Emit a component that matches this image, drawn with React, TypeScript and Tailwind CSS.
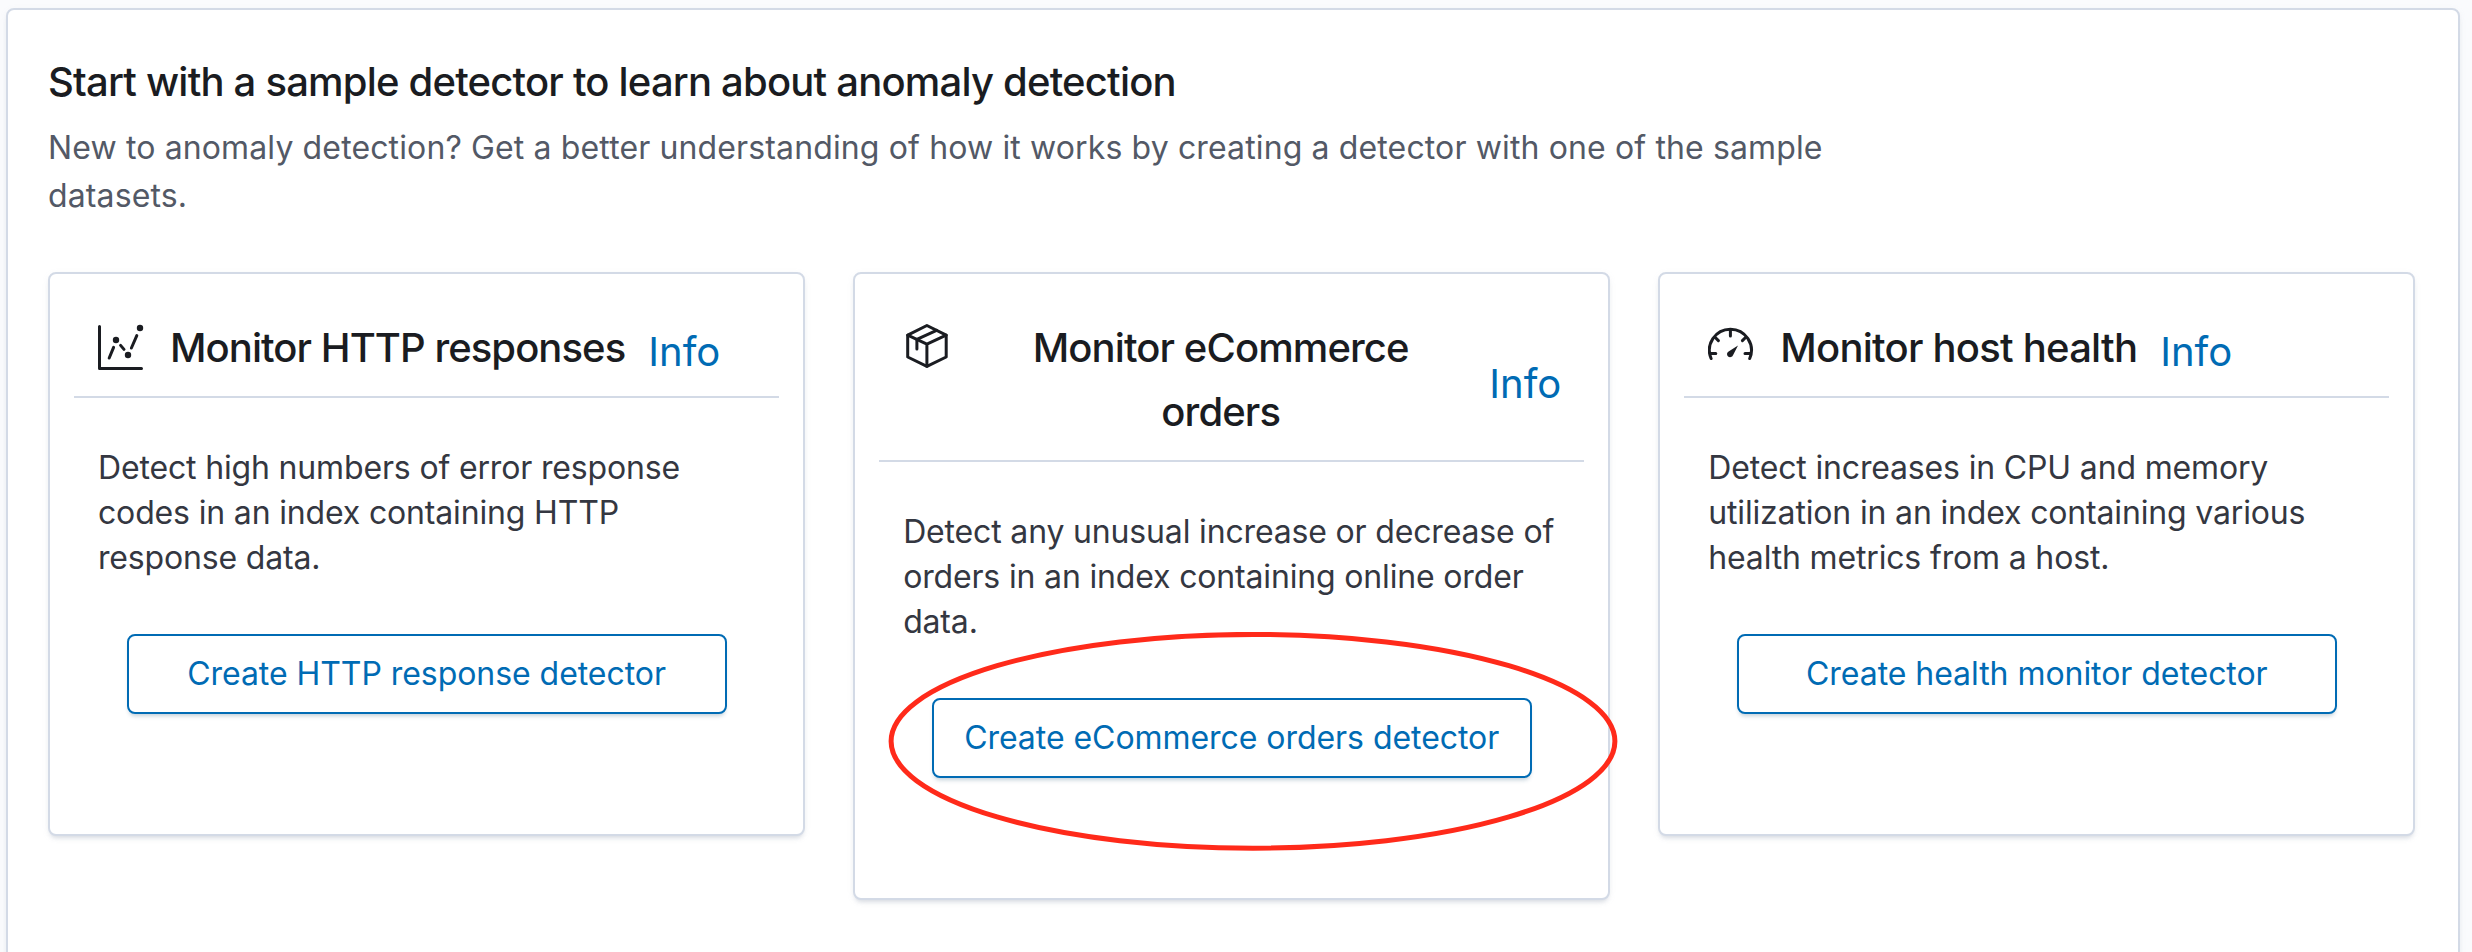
import type { ReactNode } from "react";

function ChartIcon() {
  return (
    <svg className="h-12 w-12 shrink-0" viewBox="0 0 48 48" fill="none" stroke="#1a1c21" strokeWidth="3" strokeLinecap="round" strokeLinejoin="round">
      <path d="M1.5 4.5V46.5H43.5" />
      <path d="M11.2 36L15.6 25.4M22.6 23.4L26 27.4M33.4 26L38.8 13.6" />
      <g fill="#1a1c21" stroke="none">
        <circle cx="18" cy="18" r="3.2" />
        <circle cx="30" cy="33" r="3.2" />
        <circle cx="42" cy="6" r="3.2" />
      </g>
    </svg>
  );
}

function PackageIcon() {
  return (
    <svg className="h-12 w-12 shrink-0" viewBox="0 0 48 48" fill="none" stroke="#1a1c21" strokeWidth="3" strokeLinecap="round" strokeLinejoin="round">
      <path d="M23.9 3.5L43.2 13.2V35L23.9 44.3L4.7 35V13.2Z" />
      <path d="M4.7 13.2L23.9 22.2L43.2 13.2M23.9 22.2V44.3" />
      <path d="M13.9 27V17.4L33.6 8.4" />
    </svg>
  );
}

function GaugeIcon() {
  return (
    <svg className="h-12 w-12 shrink-0" viewBox="0 0 48 48" fill="none" stroke="#1a1c21" strokeWidth="3" strokeLinecap="round">
      <path d="M3.1 36.5A21 21 0 1 1 41.7 36.5" />
      <path d="M22.4 8V14M3 31.4H7.8M41.8 31.4H37M7 15.2L10.4 18.6M37.8 15.2L34.4 18.6" />
      <path d="M30 23.6L25 33.2A3.1 3.1 0 1 1 20.6 29.4Z" fill="#1a1c21" stroke="none" />
    </svg>
  );
}

interface CardProps {
  icon: ReactNode;
  title: string;
  titleTracking: string;
  text: string;
  action: string;
  highlighted?: boolean;
}

function DetectorCard({ icon, title, titleTracking, text, action, highlighted }: CardProps) {
  return (
    <section className="flex flex-col rounded-lg border-2 border-[#d3dae6] bg-white px-6 pt-[42px] pb-[120px] shadow-[0_4px_4px_-2px_rgba(152,162,179,0.3),0_2px_10px_-4px_rgba(152,162,179,0.3)]">
      <header className="flex border-b-2 border-[#d3dae6] pb-4 pl-6 pr-[23px]">
        <div className="mr-6 pt-1.5">{icon}</div>
        <div className="flex items-center gap-[23px]">
          <h3 className={`text-center text-[40px] leading-[64px] font-medium text-[#1a1c21] ${titleTracking}`}>{title}</h3>
          <a className="mt-[7px] shrink-0 text-[40px] leading-[48px] text-[#006bb4]">Info</a>
        </div>
      </header>
      <p className="mt-[47px] px-6 text-[32px] leading-[45px] tracking-[-0.005em] text-[#343741]">{text}</p>
      <div className="relative mt-[54px] self-center">
        <button className="flex h-20 w-[600px] items-center justify-center rounded-lg border-2 border-[#006bb4] bg-white text-[32px] tracking-[-0.05px] text-[#006bb4] shadow-[0_4px_4px_-2px_rgba(54,97,126,0.3)]">
          {action}
        </button>
        {highlighted && (
          <svg className="pointer-events-none absolute -top-[66px] -left-[44px] h-[220px] w-[730px]" viewBox="0 0 730 220" fill="none">
            <ellipse cx="365" cy="109.3" rx="361.9" ry="106.9" stroke="#ff2a1a" strokeWidth="5" />
          </svg>
        )}
      </div>
    </section>
  );
}

export default function App() {
  return (
    <div className="h-[952px] w-[2472px] overflow-hidden bg-[#fafbfd] pt-2 pl-1.5 font-['Inter',sans-serif]">
      <main className="h-[1000px] w-[2454px] rounded-lg border-2 border-[#d3dae6] bg-white px-10 pt-10 shadow-[0_4px_4px_-2px_rgba(152,162,179,0.3),0_2px_10px_-4px_rgba(152,162,179,0.3)]">
        <h2 className="text-[40px] leading-[64px] font-medium tracking-[-0.02em] text-[#1a1c21]">
          Start with a sample detector to learn about anomaly detection
        </h2>
        <p className="mt-[10px] w-[1800px] text-[32px] leading-[48px] tracking-[0.13px] text-[#535966]">
          New to anomaly detection? Get a better understanding of how it works by creating a detector with one of the sample datasets.
        </p>
        <div className="mt-[52px] grid w-[2367.4px] grid-cols-3 items-start gap-12">
          <DetectorCard
            icon={<ChartIcon />}
            title="Monitor HTTP responses"
            titleTracking="tracking-[-0.94px]"
            text="Detect high numbers of error response codes in an index containing HTTP response data."
            action="Create HTTP response detector"
          />
          <DetectorCard
            icon={<PackageIcon />}
            title="Monitor eCommerce orders"
            titleTracking="tracking-[-0.9px]"
            text="Detect any unusual increase or decrease of orders in an index containing online order data."
            action="Create eCommerce orders detector"
            highlighted
          />
          <DetectorCard
            icon={<GaugeIcon />}
            title="Monitor host health"
            titleTracking="tracking-[-0.76px]"
            text="Detect increases in CPU and memory utilization in an index containing various health metrics from a host."
            action="Create health monitor detector"
          />
        </div>
      </main>
    </div>
  );
}
